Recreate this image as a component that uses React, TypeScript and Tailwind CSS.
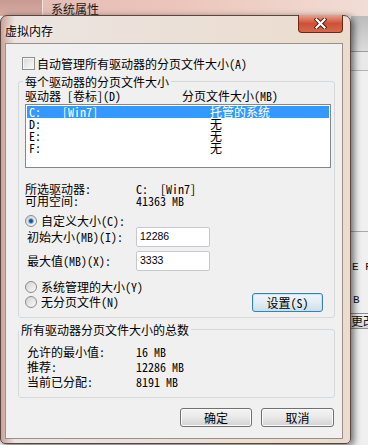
import type { ReactNode } from 'react'

const drives = [
  { d: 'C:', label: '[Win7]', size: '托管的系统' },
  { d: 'D:', label: '', size: '无' },
  { d: 'E:', label: '', size: '无' },
  { d: 'F:', label: '', size: '无' },
]

function Radio({ on }: { on?: boolean }) {
  return (
    <span className="flex h-[12px] w-[12px] shrink-0 items-center justify-center rounded-full border border-[#8a8a8a] bg-gradient-to-br from-[#d2d2d2] to-[#fbfbfb]">
      {on ? <span className="h-[6px] w-[6px] rounded-full border border-[#8cbcea] bg-[#1f4f9c]" /> : null}
    </span>
  )
}

function Btn({ children, className }: { children: ReactNode; className: string }) {
  return (
    <button
      type="button"
      className={`flex h-[19px] items-center justify-center rounded-[3px] border leading-[12px] ${className}`}
    >
      {children}
    </button>
  )
}

export default function App() {
  return (
    <div className="relative h-[445px] w-[368px] overflow-hidden bg-[#f0f0f0] text-[12px] text-black font-['Noto_Sans_Mono_CJK_SC','Noto_Sans_CJK_SC',sans-serif]">
      {/* window behind: 系统属性 */}
      <div className="flex h-[16px] bg-gradient-to-r from-[#e2bcb4] via-[#ecc6bc] to-[#f1ddd5]">
        <div className="w-[43px] border-r border-[#f4e4e0] bg-gradient-to-b from-[#c89a92] to-[#d6aca4]" />
        <div className="pl-[8px] pt-[2px] leading-[13px] text-[#1a1a1a]">系统属性</div>
      </div>
      <div className="flex flex-col overflow-hidden whitespace-nowrap pl-[351px] text-[#111]">
        <div className="h-[35px] bg-gradient-to-b from-[#bcbcbc] to-[#dcdcdc]" />
        <div className="h-[1px] bg-[#9c9c9c]" />
        <div className="h-[18px] bg-[#e9e9e9]" />
        <div className="h-[1px] bg-[#b4b4b4]" />
        <div className="h-[160px]" />
        <div className="h-[1px] bg-[#a9a9a9]" />
        <div className="mt-[29px] h-[12px] whitespace-pre pl-[1px] leading-[12px] font-['Liberation_Mono',monospace] text-[11px]">E R</div>
        <div className="mt-[21px] h-[12px] pl-[2px] leading-[12px] font-['Liberation_Mono',monospace] text-[11px]">B</div>
        <div className="mt-[7px] h-[16px] w-[40px] border-y border-[#8a8a8a] bg-gradient-to-b from-[#f4f4f4] to-[#d8d8d8] leading-[14px]">更改</div>
      </div>

      {/* 虚拟内存 dialog */}
      <div className="absolute left-0 top-[15px] flex h-[429px] w-[351px] flex-col rounded-t-[7px] rounded-b-[5px] border border-[#5a4640] bg-gradient-to-r from-[#c9a397] from-0% via-[#ebe4e1] via-[4%] to-[#ebdccd] shadow-[3px_2px_7px_rgba(0,0,0,0.55)]">
        <div className="flex h-[27px] items-start">
          <div className="ml-[4px] mt-[8px] leading-[13px] [text-shadow:0_0_4px_#fff]">虚拟内存</div>
          <div className="ml-auto mr-[7px] -mt-[1px] flex h-[18px] w-[45px] items-center justify-center rounded-b-[4px] border border-t-0 border-[#6a2618] bg-gradient-to-b from-[#e6a08e] via-[#cf4f37] to-[#d8684a]">
            <svg width="13" height="11" viewBox="0 0 13 11">
              <path d="M2.5 1.5 L10.5 9.5 M10.5 1.5 L2.5 9.5" stroke="#4a1a12" strokeWidth="4" strokeLinecap="square" />
              <path d="M2.5 1.5 L10.5 9.5 M10.5 1.5 L2.5 9.5" stroke="#ffffff" strokeWidth="2.2" strokeLinecap="square" />
            </svg>
          </div>
        </div>

        <div className="ml-[4px] flex h-[396px] w-[338px] flex-col border border-[#9a8f8a] bg-[#f0f0f0]">
          <div className="ml-[16px] mt-[13px] flex h-[13px] items-center gap-[2px] leading-[13px]">
            <span className="h-[13px] w-[13px] border border-[#8f8f8f] bg-gradient-to-br from-[#d8d8d8] to-[#fbfbfb] shadow-[inset_0_0_0_1px_#f4f4f4]" />
            <span>自动管理所有驱动器的分页文件大小(A)</span>
          </div>

          {/* per-drive group */}
          <div className="ml-[12px] mt-[11px] flex h-[237px] w-[317px] flex-col rounded-[3px] border border-[#d5d9dc]">
            <div className="-mt-[7px] ml-[4px] h-[13px] w-fit bg-[#f0f0f0] px-[2px] leading-[13px]">每个驱动器的分页文件大小</div>
            <div className="mt-[2px] flex h-[12px] pl-[6px] leading-[12px]">
              <span className="w-[157px]">驱动器 [卷标](D)</span>
              <span>分页文件大小(MB)</span>
            </div>
            <div className="ml-[6px] mt-[2px] h-[64px] w-[306px] border border-[#828790] bg-white p-[1px]">
              {drives.map((r, i) => (
                <div
                  key={r.d}
                  className={`flex h-[12px] pl-[2px] leading-[12px] ${i === 0 ? 'bg-[#3399ff] text-white' : ''}`}
                >
                  <span className="flex w-[181px]">
                    <span className="w-[33px]">{r.d}</span>
                    <span>{r.label}</span>
                  </span>
                  <span>{r.size}</span>
                </div>
              ))}
            </div>

            <div className="mt-[15px] flex h-[12px] pl-[6px] leading-[12px]">
              <span className="w-[111px]">所选驱动器:</span>
              <span className="whitespace-pre">C:  [Win7]</span>
            </div>
            <div className="flex h-[12px] pl-[6px] leading-[12px]">
              <span className="w-[111px]">可用空间:</span>
              <span>41363 MB</span>
            </div>

            <div className="mt-[8px] flex h-[12px] items-center gap-[4px] pl-[6px] leading-[12px]">
              <Radio on />
              <span>自定义大小(C):</span>
            </div>
            <div className="flex h-[20px] items-center pl-[8px]">
              <span className="w-[109px] leading-[12px]">初始大小(MB)(I):</span>
              <span className="flex h-[20px] w-[74px] items-center rounded-[2px] border border-[#c5c9ce] bg-white pl-[3px] font-['Liberation_Sans',sans-serif] text-[10.5px]">12286</span>
            </div>
            <div className="mt-[4px] flex h-[20px] items-center pl-[8px]">
              <span className="w-[109px] leading-[12px]">最大值(MB)(X):</span>
              <span className="flex h-[20px] w-[74px] items-center rounded-[2px] border border-[#c5c9ce] bg-white pl-[3px] font-['Liberation_Sans',sans-serif] text-[10.5px]">3333</span>
            </div>

            <div className="mt-[10px] flex items-start justify-between pl-[6px] pr-[11px]">
              <div className="flex flex-col gap-[3px]">
                <div className="flex h-[12px] items-center gap-[4px] leading-[12px]">
                  <Radio />
                  <span>系统管理的大小(Y)</span>
                </div>
                <div className="flex h-[12px] items-center gap-[4px] leading-[12px]">
                  <Radio />
                  <span>无分页文件(N)</span>
                </div>
              </div>
              <Btn className="mt-[12px] w-[71px] border-[#3c7fb1] bg-gradient-to-b from-[#f0f6fa] via-[#e2edf4] to-[#cddfea] shadow-[inset_0_0_0_1px_#bfe3f7]">
                设置(S)
              </Btn>
            </div>
          </div>

          {/* totals group */}
          <div className="ml-[12px] mt-[11px] flex h-[69px] w-[317px] flex-col rounded-[3px] border border-[#d5d9dc]">
            <div className="-mt-[7px] h-[13px] w-fit bg-[#f0f0f0] px-[2px] leading-[13px]">所有驱动器分页文件大小的总数</div>
            <div className="mt-[10px] flex flex-col gap-[3px] pl-[8px] leading-[12px]">
              <div className="flex h-[12px]">
                <span className="w-[109px]">允许的最小值:</span>
                <span>16 MB</span>
              </div>
              <div className="flex h-[12px]">
                <span className="w-[109px]">推荐:</span>
                <span>12286 MB</span>
              </div>
              <div className="flex h-[12px]">
                <span className="w-[109px]">当前已分配:</span>
                <span>8191 MB</span>
              </div>
            </div>
          </div>

          <div className="mr-[8px] mt-[10px] flex justify-end gap-[9px]">
            <Btn className="w-[72px] border-[#707070] bg-gradient-to-b from-[#f4f4f4] via-[#e8e8e8] to-[#d2d2d2] shadow-[inset_0_0_0_1px_#fbfbfb]">确定</Btn>
            <Btn className="w-[73px] border-[#707070] bg-gradient-to-b from-[#f4f4f4] via-[#e8e8e8] to-[#d2d2d2] shadow-[inset_0_0_0_1px_#fbfbfb]">取消</Btn>
          </div>
        </div>
      </div>
    </div>
  )
}
